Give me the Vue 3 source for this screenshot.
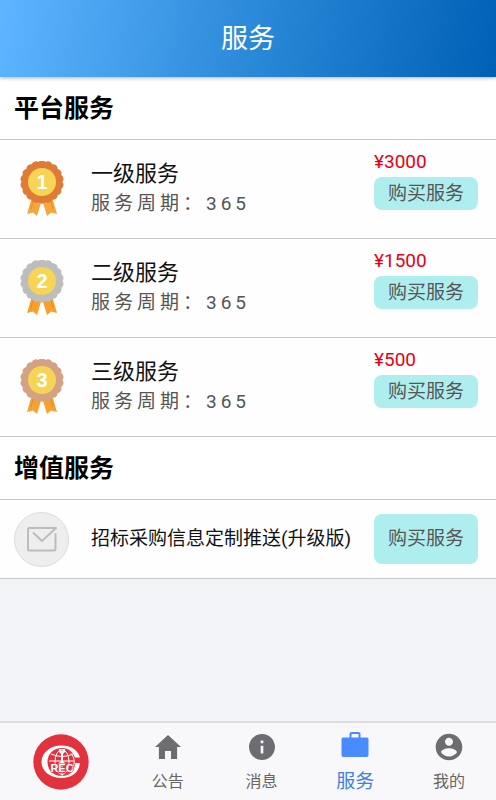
<script setup>
import { ref } from 'vue'

// 平台服務列表
const levels = [
  { id: 1, name: '一级服务', days: '365', price: 3000, color: '#e07b35', ribbon: '#f6a63a' },
  { id: 2, name: '二级服务', days: '365', price: 1500, color: '#bdbdbd', ribbon: '#f8a02c' },
  { id: 3, name: '三级服务', days: '365', price: 500, color: '#d3a282', ribbon: '#f5a22f' },
]

// 底部選單
const tabs = [
  { key: 'notice', label: '公告' },
  { key: 'message', label: '消息' },
  { key: 'service', label: '服务' },
  { key: 'mine', label: '我的' },
]

const active = ref('service')

// 獎章的波浪外框
const scallop = (cx, cy, r, count) => {
  const point = (i) => {
    const a = (i / count) * Math.PI * 2
    return `${(cx + r * Math.cos(a)).toFixed(2)} ${(cy + r * Math.sin(a)).toFixed(2)}`
  }
  let d = `M${point(0)}`
  for (let i = 1; i <= count; i++) {
    d += `A4.6 4.6 0 0 1 ${point(i)}`
  }
  return d + 'Z'
}

const badge = scallop(22, 21, 20.4, 18)
</script>

<template>
  <div class="page">
    <header class="header">
      <h1>服务</h1>
    </header>

    <main class="content">
      <section>
        <h2 class="section-title">平台服务</h2>
        <div v-for="item in levels" :key="item.id" class="row">
          <div class="icon">
            <svg width="44" height="56" viewBox="0 0 44 56" aria-hidden="true">
              <path d="M12 36L7 53L13 51.500L17 55L21.500 40ZM32 36L37 53L31 51.500L27 55L22.500 40Z" :fill="item.ribbon" />
              <path d="M13 40L11 48M31 40L33 48" stroke="#e98a2b" stroke-width="1" />
              <path :d="badge" :fill="item.color" />
              <circle cx="22" cy="21" r="14" fill="#f6d455" />
              <text x="22" y="28" text-anchor="middle" class="medal-num">{{ item.id }}</text>
            </svg>
          </div>
          <div class="info">
            <h3>{{ item.name }}</h3>
            <p>服务周期：{{ item.days }}</p>
          </div>
          <div class="buy">
            <span class="price">¥{{ item.price }}</span>
            <button type="button" class="buy-btn">购买服务</button>
          </div>
        </div>
      </section>

      <section>
        <h2 class="section-title">增值服务</h2>
        <div class="row extra">
          <div class="icon mail">
            <svg width="32" height="26" viewBox="0 0 32 26" fill="none" stroke="#bcbcbc" stroke-width="2" stroke-linejoin="round" stroke-linecap="round" aria-hidden="true">
              <path d="M29.500 8V23Q29.500 24.500 28 24.500H3.500Q2 24.500 2 23V3.500Q2 2 3.500 2H30L16 15L7.500 7" />
            </svg>
          </div>
          <p class="name">招标采购信息定制推送(升级版)</p>
          <button type="button" class="buy-btn large">购买服务</button>
        </div>
      </section>
    </main>

    <nav class="tabbar">
      <div class="logo">
        <svg width="56" height="56" viewBox="0 0 56 56" role="img" aria-label="CREC">
          <circle cx="28" cy="28" r="27.700" fill="#e2323e" />
          <g fill="none" stroke="#fff" stroke-width="1">
            <ellipse cx="29" cy="28" rx="7" ry="12.500" />
            <path d="M29 15V42M16 27H41M18 20Q29 25 40 20" />
            <path d="M38 19.500A12.500 12.500 0 0 1 38 36.500" />
          </g>
          <path d="M47 23.500C45 16 38 11.500 28.500 11.500C17 11.500 8.500 19 8.500 28C8.500 37 17 44 28.500 44C38 44 46 39 47 29H42.500C41 37.500 36 42 29 42C20.500 42 14.500 36 14.500 28C14.500 20 20.500 14 29 14C35.500 14 40 18 42 23.500Z" fill="#fff" />
          <path d="M26 15h2v2h2v-2h2v3l-2 2v7l3 3h-8l3-3v-7l-2-2z" fill="#fff" />
          <text x="29" y="38" text-anchor="middle" class="logo-text">REC</text>
        </svg>
      </div>
      <button
        v-for="tab in tabs"
        :key="tab.key"
        type="button"
        class="tab"
        :class="{ active: active === tab.key }"
        @click="active = tab.key"
      >
        <svg v-if="tab.key === 'notice'" viewBox="0 0 512 512" aria-hidden="true">
          <path d="M208 448V320h96v128h97.600V256H464L256 64 48 256h62.400v192z" />
        </svg>
        <svg v-else-if="tab.key === 'message'" viewBox="0 0 512 512" aria-hidden="true">
          <path d="M256 48C141.200 48 48 141.200 48 256s93.200 208 208 208 208-93.200 208-208S370.800 48 256 48zm21 312h-42V235h42v125zm0-166h-42v-42h42v42z" />
        </svg>
        <svg v-else-if="tab.key === 'service'" viewBox="0 0 32 32" aria-hidden="true">
          <path d="M4 6.500H10.500V3Q10.500 1 12.500 1H19.500Q21.500 1 21.500 3V6.500H28Q29.500 6.500 29.500 8V24Q29.500 26 27.500 26H4.500Q2.500 26 2.500 24V8Q2.500 6.500 4 6.500ZM12.500 6.500H19.500V3H12.500Z" />
        </svg>
        <svg v-else viewBox="0 0 24 24" aria-hidden="true">
          <path d="M12 2C6.480 2 2 6.480 2 12s4.480 10 10 10 10-4.480 10-10S17.520 2 12 2zm0 3c1.660 0 3 1.340 3 3s-1.340 3-3 3-3-1.340-3-3 1.340-3 3-3zm0 14.200c-2.500 0-4.710-1.280-6-3.220.030-1.990 4-3.080 6-3.080 1.990 0 5.970 1.090 6 3.080-1.290 1.940-3.500 3.220-6 3.220z" />
        </svg>
        <span>{{ tab.label }}</span>
      </button>
    </nav>
  </div>
</template>

<style>
body {
  margin: 0;
}
</style>

<style scoped>
.page {
  display: flex;
  flex-direction: column;
  min-height: 100vh;
  background: #f3f4f8;
  color: #111;
  font-family: Roboto, "Noto Sans CJK SC", sans-serif;
}

h1,
h2,
h3,
p {
  margin: 0;
  font-weight: 400;
}

button {
  margin: 0;
  padding: 0;
  border: 0;
  font-family: inherit;
  cursor: pointer;
}

.header {
  position: relative;
  display: flex;
  align-items: center;
  justify-content: center;
  height: 77px;
  background: linear-gradient(100deg, #5fb5ff 0%, #2a88d8 52%, #0060b5 100%);
  box-shadow: 0 1px 4px rgba(0, 0, 0, 0.3);
}

.header h1 {
  color: #fff;
  font-size: 27px;
  line-height: 40px;
}

.content {
  flex: 1;
}

.section-title {
  box-sizing: border-box;
  height: 63px;
  padding-left: 14px;
  border-bottom: 1px solid #c8c7cc;
  background: #fff;
  color: #000;
  font-size: 25px;
  font-weight: 700;
  line-height: 64px;
}

.row {
  display: flex;
  align-items: center;
  box-sizing: border-box;
  min-height: 99px;
  padding: 0 18px 0 14px;
  border-bottom: 1px solid #c8c7cc;
  background: #fefefe;
}

.icon {
  display: flex;
  flex: none;
  align-items: center;
  justify-content: center;
  width: 55px;
  margin-right: 22px;
}

.medal-num {
  fill: #fff;
  font-family: "Liberation Sans", sans-serif;
  font-size: 20px;
  font-weight: 700;
}

.info {
  flex: 1;
}

.info h3 {
  font-size: 22px;
  line-height: 30px;
}

.info p {
  color: #555;
  font-size: 19px;
  line-height: 30px;
  letter-spacing: 4px;
}

.buy {
  display: flex;
  flex-direction: column;
  align-self: flex-start;
  width: 104px;
  padding-top: 7px;
}

.price {
  color: #e60012;
  font-size: 19px;
  line-height: 30px;
}

.buy-btn {
  width: 104px;
  height: 33px;
  border-radius: 8px;
  background: #afeeee;
  color: #555;
  font-size: 19px;
  line-height: 32px;
}

.buy-btn.large {
  flex: none;
  height: 50px;
}

.extra {
  min-height: 79px;
}

.mail {
  box-sizing: border-box;
  height: 55px;
  border: 1px solid #dcdcdc;
  border-radius: 50%;
  background: #efeeef;
}

.name {
  flex: 1;
  font-size: 19px;
  line-height: 28px;
}

.tabbar {
  position: sticky;
  bottom: 0;
  display: flex;
  box-sizing: border-box;
  height: 79px;
  border-top: 2px solid #dddde0;
  background: #f8f8fa;
}

.logo {
  display: flex;
  flex: none;
  align-items: center;
  justify-content: center;
  width: 121px;
}

.logo-text {
  fill: #fff;
  stroke: #e2323e;
  stroke-width: 1px;
  paint-order: stroke;
  font-family: "Liberation Sans", sans-serif;
  font-size: 11px;
  font-weight: 700;
}

.tab {
  display: flex;
  flex: 1;
  flex-direction: column;
  align-items: center;
  justify-content: flex-start;
  padding-top: 8px;
  background: none;
  color: #666;
  font-size: 16px;
}

.tab svg {
  flex: none;
  width: 32px;
  height: 32px;
  fill: #6d6c70;
}

.tab span {
  margin-top: 7px;
  line-height: 24px;
}

.tab.active {
  color: #4080e0;
  font-size: 19px;
}

.tab.active svg {
  fill: #488aff;
}
</style>
